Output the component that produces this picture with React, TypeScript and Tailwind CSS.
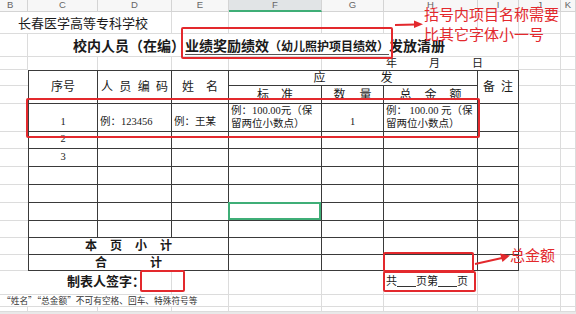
import React from 'react';

const SONG = "font-['Liberation_Serif','Noto_Sans_CJK_SC',serif]";
const HEI = "font-['Noto_Sans_CJK_SC',sans-serif]";

type CellProps = { noRight?: boolean; noBottom?: boolean; className?: string; children?: React.ReactNode };

// light sheet gridline cell
const Cell: React.FC<CellProps> = ({ noRight, noBottom, className = '', children }) => (
  <div className={`${noRight ? '' : 'border-r'} ${noBottom ? '' : 'border-b'} border-[#dcdcdc] ${className}`}>{children}</div>
);

// dark table cell
const T: React.FC<{ className?: string; children?: React.ReactNode }> = ({ className = '', children }) => (
  <div className={`border-r border-b border-[#3a3a3a] ${className}`}>{children}</div>
);

const blanks = (n: number, key: string, props: CellProps = {}) =>
  Array.from({ length: n }, (_, i) => <Cell key={key + i} {...props} />);

const headers = [
  { l: 'B', w: 'w-[28px]' },
  { l: 'C', w: 'w-[70px]' },
  { l: 'D', w: 'w-[74px]' },
  { l: 'E', w: 'w-[57px]' },
  { l: 'F', w: 'w-[93px]' },
  { l: 'G', w: 'w-[62px]' },
  { l: 'H', w: 'w-[94px]' },
  { l: 'I', w: 'w-[41px]' },
  { l: 'J', w: 'w-[42px]' },
  { l: 'K', w: 'flex-1' },
];

const SalaryTable: React.FC = () => {
  const dataRows = [1, 2, 3, 4, 5, 6, 7];
  return (
    <div className="col-span-7 row-span-11 border-l border-t border-[#3a3a3a]">
      <div className={`grid grid-cols-[69px_74px_57px_93px_62px_94px_41px] grid-rows-[15px_18px_28px_17px_18px_18px_18px_18px_17px_17px_16px] h-full ${SONG} text-[#1a1a1a]`}>
        <T className="row-span-2 flex items-center justify-center text-[12px]">序号</T>
        <T className="row-span-2 flex items-center justify-between px-[3px] text-[12px]">
          <span>人</span><span>员</span><span>编</span><span>码</span>
        </T>
        <T className="row-span-2 flex items-center justify-center gap-[12px] text-[12px]">
          <span>姓</span><span>名</span>
        </T>
        <T className="col-span-3 flex items-center justify-center gap-[55px] text-[12px]">
          <span>应</span><span>发</span>
        </T>
        <T className="row-span-2 flex items-center justify-center gap-[6px] text-[12px]">
          <span>备</span><span>注</span>
        </T>
        <T className="flex items-center justify-center gap-[12px] text-[12px]">
          <span>标</span><span>准</span>
        </T>
        <T className="flex items-center justify-center gap-[14px] text-[12px]">
          <span>数</span><span>量</span>
        </T>
        <T className="flex items-center justify-center gap-[13px] text-[12px]">
          <span>总</span><span>金</span><span>额</span>
        </T>

        {dataRows.map((n) =>
          n === 1 ? (
            <React.Fragment key={n}>
              <T className="flex items-end justify-center pb-[1px] text-[10.5px]">1</T>
              <T className="flex items-end pl-[2px] pb-[1px] text-[10.5px] whitespace-nowrap">例：123456</T>
              <T className="flex items-end pl-[2px] pb-[1px] text-[10.5px] whitespace-nowrap">例：王某</T>
              <T className="flex flex-col justify-end pl-[2px] pb-[1px] text-[10.5px] leading-[13px] whitespace-nowrap">
                <span>例：100.00元（保</span>
                <span>留两位小数点）</span>
              </T>
              <T className="flex items-end justify-center pb-[1px] text-[10.5px]">1</T>
              <T className="flex flex-col justify-end pl-[2px] pb-[1px] text-[10.5px] leading-[13px] whitespace-nowrap">
                <span>例： 100.00 元（保</span>
                <span>留两位小数点）</span>
              </T>
              <T />
            </React.Fragment>
          ) : (
            <React.Fragment key={n}>
              <T className="flex items-end justify-center pb-[1px] text-[10.5px]">{n <= 3 ? n : ''}</T>
              <T />
              <T />
              <T className="relative">
                {n === 6 && <div className="absolute -left-px -top-px right-0 bottom-0 border-2 border-[#3fae77]" />}
              </T>
              <T />
              <T />
              <T />
            </React.Fragment>
          )
        )}

        <T className="col-span-3 flex items-center justify-center gap-[13px] text-[12px] font-bold">
          <span>本</span><span>页</span><span>小</span><span>计</span>
        </T>
        <T /><T /><T /><T />
        <T className="col-span-3 flex items-center justify-center gap-[43px] text-[12px] font-bold">
          <span>合</span><span>计</span>
        </T>
        <T /><T /><T /><T />
      </div>
    </div>
  );
};

const Arrow: React.FC<{ className: string; x1: number; y1: number; x2: number; y2: number; head: string; w: number; h: number }> = ({ className, x1, y1, x2, y2, head, w, h }) => (
  <svg className={className} width={w} height={h} viewBox={`0 0 ${w} ${h}`}>
    <line x1={x1} y1={y1} x2={x2} y2={y2} stroke="#e3292d" strokeWidth="2" />
    <polygon points={head} fill="#e3292d" />
  </svg>
);

export default function App() {
  return (
    <div lang="zh-CN" className="relative w-[576px] h-[314px] overflow-hidden bg-white text-[#1a1a1a]">
      {/* column letters */}
      <div className="flex h-[12px] bg-[#f7f7f7] font-['Liberation_Sans',sans-serif] text-[9.5px] text-[#666]">
        {headers.map((h) =>
          h.l === 'F' ? (
            <div key={h.l} className={`${h.w} flex items-center justify-center border-r border-b-2 border-r-[#d4d4d4] border-b-[#3fae77] bg-[#e1e4e6]`}>{h.l}</div>
          ) : (
            <div key={h.l} className={`${h.w} flex items-center ${h.l === 'B' ? 'pl-[7px]' : 'justify-center'} border-r border-b border-[#d4d4d4]`}>{h.l}</div>
          )
        )}
      </div>

      {/* sheet body */}
      <div className="grid grid-cols-[28px_70px_74px_57px_93px_62px_94px_41px_42px_1fr] grid-rows-[22px_23px_13px_16px_18px_28px_17px_18px_18px_18px_18px_17px_17px_16px_24px_12px_5px]">
        {/* row: school */}
        <Cell className="col-span-3 flex items-center pl-[18px] text-[13px] whitespace-nowrap font-['Noto_Sans_CJK_SC',serif]">长春医学高等专科学校</Cell>
        {blanks(7, 'r1')}

        {/* row: title */}
        <Cell />
        <Cell className={`col-span-7 flex items-center pl-[45px] pt-[2px] ${SONG} font-semibold text-[14px] whitespace-nowrap`}>
          <span>校内人员（在编）</span>
          <span className="underline decoration-[#555] underline-offset-[3px]">
            业绩奖励绩效<span className="text-[12px]">（幼儿照护项目绩效）</span>
          </span>
          <span>发放清册</span>
        </Cell>
        {blanks(2, 'r2')}

        {/* row: date */}
        <Cell />
        {blanks(4, 'r3', { noBottom: true })}
        <Cell noBottom className={`col-span-3 flex items-center pl-[64px] gap-[32px] ${SONG} text-[11px]`}>
          <span>年</span><span>月</span><span>日</span>
        </Cell>
        {blanks(2, 'r3b')}

        {/* table rows */}
        <Cell noRight />
        <SalaryTable />
        {blanks(2, 'r4')}
        {Array.from({ length: 10 }, (_, i) => (
          <React.Fragment key={'tr' + i}>
            <Cell noRight />
            <Cell />
            <Cell />
          </React.Fragment>
        ))}

        {/* row: signature */}
        <Cell className={`col-span-3 flex items-center pl-[67px] pb-[2px] ${SONG} font-bold text-[13px] whitespace-nowrap`}>制表人签字：</Cell>
        {blanks(3, 'r15')}
        <Cell className={`flex items-center pl-[2px] pb-[2px] ${SONG} text-[11px] whitespace-nowrap`}>
          <span>共</span>
          <span className="inline-block w-[19px] h-[10px] border-b border-[#333]" />
          <span>页第</span>
          <span className="inline-block w-[19px] h-[10px] border-b border-[#333]" />
          <span>页</span>
        </Cell>
        {blanks(3, 'r15b')}

        {/* row: note */}
        <Cell className={`col-span-4 flex items-center pl-[2px] ${HEI} text-[8.7px] text-[#333] whitespace-nowrap`}>“姓名”“总金额”不可有空格、回车、特殊符号等</Cell>
        {blanks(6, 'r16')}

        {blanks(10, 'r17')}
      </div>
      <div className="h-[2px] bg-[#e9e9e9]" />

      {/* red annotations */}
      <div className="absolute left-[181px] top-[27px] w-[212px] h-[32px] border-2 border-[#e3292d] rounded-[2px]" />
      <Arrow className="absolute left-[394px] top-[17px]" w={30} h={14} x1={1} y1={8} x2={22} y2={7.5} head="20,3.5 29,7.3 20,11" />
      <div className={`absolute left-[424px] top-[4px] ${HEI} text-[15px] leading-[20px] text-[#e3292d] whitespace-nowrap`}>
        <div>括号内项目名称需要</div>
        <div>比其它字体小一号</div>
      </div>

      <div className="absolute left-[26px] top-[98px] w-[454px] h-[40px] border-2 border-[#e3292d] rounded-[2px]" />

      <div className="absolute left-[140px] top-[270px] w-[45px] h-[22px] border-2 border-[#e3292d] rounded-[2px]" />
      <div className="absolute left-[383px] top-[252px] w-[91px] h-[20px] border-2 border-[#e3292d] rounded-[2px]" />
      <div className="absolute left-[383px] top-[271px] w-[93px] h-[21px] border-2 border-[#e3292d] rounded-[2px]" />
      <Arrow className="absolute left-[474px] top-[250px]" w={38} h={18} x1={1} y1={14} x2={28} y2={8} head="26,3.5 36,5.5 28.5,12" />
      <div className={`absolute left-[510px] top-[245px] ${HEI} text-[15px] leading-[20px] text-[#e3292d] whitespace-nowrap`}>总金额</div>
    </div>
  );
}
